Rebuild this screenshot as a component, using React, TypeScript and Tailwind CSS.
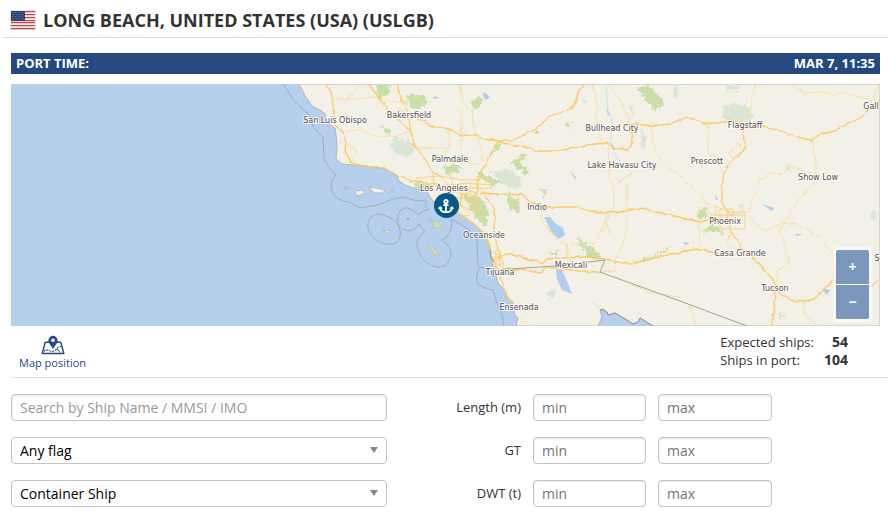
import { useId } from "react";
import type { InputHTMLAttributes, ReactNode } from "react";
import { FaAnchor } from "react-icons/fa";
import clsx from "clsx";

type MapLabel = { name: string; x: number; y: number };

const cities: MapLabel[] = [
  { name: "San Luis Obispo", x: 335, y: 123 },
  { name: "Bakersfield", x: 409, y: 118 },
  { name: "Palmdale", x: 450, y: 162 },
  { name: "Los Angeles", x: 444, y: 191 },
  { name: "Oceanside", x: 484, y: 238 },
  { name: "Tijuana", x: 500, y: 275 },
  { name: "Ensenada", x: 519, y: 310 },
  { name: "Indio", x: 537, y: 210 },
  { name: "Mexicali", x: 571, y: 268 },
  { name: "Bullhead City", x: 612, y: 131 },
  { name: "Lake Havasu City", x: 622, y: 168 },
  { name: "Prescott", x: 707, y: 164 },
  { name: "Flagstaff", x: 745, y: 128 },
  { name: "Phoenix", x: 725, y: 224 },
  { name: "Casa Grande", x: 740, y: 256 },
  { name: "Tucson", x: 775, y: 291 },
  { name: "Show Low", x: 818, y: 180 },
  { name: "Gall", x: 871, y: 109 },
  { name: "S", x: 877, y: 261 },
];

const highways = [
  "M368 84 L379 97 L388 109 L400 121 L411 132 L415 146 L425 159 L431 170 L440 177",
  "M325 84 L331 92 L333 105 L334 116 L336 125 L343 132 L346 142 L344 152 L353 164 L373 167 L386 168 L397 176 L410 180 L425 183 L440 184",
  "M397 84 L401 100 L408 112 L411 132",
  "M397 110 L417 118 L432 126 L450 130 L460 135 L476 135 L484 139 L498 141 L513 140 L530 132 L536 129 L550 116 L562 112 L573 108 L577 97 L583 84",
  "M498 141 L490 155 L481 173 L477 184 L476 200",
  "M498 142 L530 148 L537 151 L560 151 L575 147 L607 142 L613 148 L628 150 L632 141 L633 124 L652 126 L670 124 L687 117 L703 123 L719 123 L729 121 L744 124 L763 126 L782 131 L796 137 L812 140 L822 134 L834 131 L852 121 L861 117 L872 106 L880 101",
  "M743 128 L744 140 L747 147 L739 155 L730 162 L724 171 L722 190 L722 203 L728 213 L730 230 L742 249 L757 261 L773 280 L780 294 L790 300 L804 301 L814 299 L824 289 L833 281 L849 286 L866 288 L880 280",
  "M480 193 L500 194 L522 195 L533 204 L546 207 L577 207 L590 211 L615 213 L640 208 L670 215 L700 222 L712 219",
  "M454 208 L467 219 L478 227 L486 234 L490 247 L492 257 L497 268 L502 284 L509 300 L514 303",
  "M494 260 L508 254 L533 260 L542 264 L547 259 L560 258 L591 257 L610 260 L615 263 L632 264 L655 258 L680 252 L696 249 L714 253 L730 252",
  "M502 269 L520 269 L540 273 L545 268 L557 268 L580 271 L600 272",
  "M774 285 L775 303 L772 326",
  "M480 188 L488 200 L495 209 L494 230 L498 250 L500 262",
];

const roads = [
  "M333 99 L352 99 L375 97 L398 102 L410 102",
  "M346 132 L360 129 L376 137 L392 136 L411 132",
  "M344 152 L352 163 L357 151 L345 143",
  "M348 99 L362 84 M418 148 L448 148 M449 130 L449 147 L444 163",
  "M460 84 L461 100 L472 113 L475 131 L481 150 L483 162 M450 162 L480 164",
  "M461 84 L463 98 M593 84 L597 105 L597 126 L602 140 L608 145 L609 180 L614 186 L614 206",
  "M608 84 L621 102 L631 124 M621 122 L633 124 L632 145",
  "M461 134 L461 110 M652 126 L655 150 L663 163 L678 174 L707 203 L722 209",
  "M707 123 L709 134 L708 155 L716 156 L722 171",
  "M730 153 L738 143 L741 144 L739 153 L733 158 L729 153",
  "M755 84 L752 100 L749 117 M790 84 L803 93 L820 92 L833 95 L843 92 L858 97 L875 100 L876 88 L880 86",
  "M812 140 L816 162 L816 180 L796 203 L780 230 L785 246 L789 263 L778 270 L777 286",
  "M751 206 L759 179 L773 173 L782 174 L791 166 L803 171 L816 174",
  "M749 215 L758 226 L765 231 L782 223 L797 225 L817 235 L833 254 L834 280",
  "M804 302 L804 313 L819 326 M690 306 L696 326 M740 252 L727 244 L730 231",
  "M632 172 L617 184 M627 184 L627 208 L627 230 L620 250 L614 264 L614 272 L602 271",
  "M542 219 L553 237 L567 245 L571 268 M567 245 L567 257 M570 245 L594 244 L606 226 L607 211",
  "M608 213 L600 232 M544 206 L541 218 L555 238 M632 285 L650 292 L680 297",
  "M700 222 L699 246 M700 207 L714 215 L730 216 L744 211 L752 208",
  "M520 318 L532 326 M461 124 L461 148",
];

const urban = [
  "M416 178 L440 176 L462 180 L480 180 M427 185 L442 186 L465 183 L492 185 M441 176 L450 188 L461 194 L472 194",
  "M433 174 L434 184 M448 170 L452 180 L453 196 M460 183 L461 206 L470 214 M466 182 L467 200 L478 205",
  "M455 190 L475 192 L474 209 M456 198 L478 199 M458 204 L483 216 M463 192 L458 214 L470 216",
  "M470 183 L470 198 L480 207 M474 180 L478 176 L492 183 L491 188 L470 188 M452 194 L462 206",
  "M490 252 L500 255 L504 263 L496 266 M496 250 L496 268 M493 257 L503 258 M500 250 L500 267 M504 262 L501 275",
  "M716 207 L716 222 L733 222 L733 209 L720 209 L720 229 L745 229 L745 212 L727 212 L727 224 M710 215 L744 215",
];

const parks = [
  "M407 95 L425 94 L427 100 L420 110 L408 107 Z",
  "M471 101 L482 98 L483 105 L473 111 Z",
  "M637 88 L647 84 L657 94 L664 102 L656 112 L648 103 L643 95 Z",
  "M510 163 L524 153 L528 155 L520 162 L529 172 L525 174 Z",
  "M378 124 L390 131 L390 135 L380 127 Z",
  "M463 194 L480 198 L488 212 L486 227 L475 218 Z",
  "M442 166 L459 164 L460 173 L448 175 Z",
  "M475 170 L488 176 L501 182 L494 186 L480 178 Z",
  "M576 236 L590 246 L600 255 L599 260 L588 257 L582 247 Z",
  "M505 192 L518 200 L520 213 L510 209 Z",
  "M565 123 L571 121 L571 127 L565 127 Z M534 131 L541 128 L538 133 Z",
  "M697 209 L708 208 L705 217 L698 218 Z M738 205 L743 206 L742 210 Z",
  "M412 182 L425 183 L424 190 L414 188 Z",
  "M638 261 L652 256 L672 246 L671 248 L651 259 Z",
  "M711 224 L718 226 L726 236 L716 231 L702 232 Z M549 253 L559 251 L557 256 Z",
  "M492 151 L499 144 L501 150 L494 152 Z M541 190 L546 189 L545 198 Z",
  "M377 84 L390 84 L388 94 L378 99 Z",
];

const forests = [
  "M392 142 L407 139 L417 147 L409 156 L394 154 L390 147 Z",
  "M393 138 L399 138 L398 143 L391 142 Z",
  "M490 170 L512 171 L523 180 L518 188 L506 187 L497 178 Z",
  "M722 107 L735 103 L748 107 L753 116 L750 123 L735 122 L724 119 Z",
  "M725 84 L741 84 L738 91 L727 89 Z M673 84 L680 84 L677 97 L673 96 Z",
  "M642 128 L646 140 L645 150 L641 142 Z M628 105 L634 107 L633 117 L629 112 Z",
  "M548 291 L554 289 L556 294 L549 299 Z M785 165 L791 165 L789 172 Z",
  "M869 212 L877 210 L878 219 L871 220 Z M778 313 L785 314 L780 320 Z",
  "M582 98 L586 99 L585 106 Z M508 198 L520 205 L519 211 L509 206 Z",
];

const lakes = [
  "M544 217 L550 217 L555 223 L563 228 L565 235 L559 239 L552 233 Z",
  "M556 269 L562 270 L567 281 L572 294 L562 290 L557 279 Z",
  "M484 92 L490 97 L486 100 L483 96 Z",
  "M570 171 L577 178 L575 179 Z M762 204 L774 208 L772 211 Z",
  "M823 289 L831 290 L826 295 Z M795 234 L803 234 L797 236 Z",
  "M434 96 L439 98 L433 99 Z M612 144 L616 150 L612 149 Z",
  "M683 242 L690 243 L685 245 Z M715 194 L718 199 L716 200 Z M606 108 L610 114 L608 116 Z",
];

const islands = [
  "M354 191 L363 190 L365 193 L358 196 Z",
  "M369 187 L376 188 L385 190 L383 193 L374 193 Z",
  "M344 188 L350 188 L349 190 Z M390 190 L394 190",
  "M383 230 L390 231 L389 234 Z",
  "M428 219 L433 221 L431 222 Z",
];

function FlagIcon() {
  return (
    <svg viewBox="0 0 26 20" className="h-5 w-6.5 shrink-0" role="img" aria-label="United States">
      <rect width="26" height="20" fill="#e4e4e4" />
      <rect x="1" y="1" width="24" height="18" fill="#f2eeee" />
      {[1, 4, 7, 10, 12, 15, 18].map((y) => (
        <rect key={y} x="1" y={y} width="24" height="1.2" fill="#c8444d" />
      ))}
      <rect x="1" y="1" width="14" height="10" fill="#31456f" />
      <g fill="#6679a0">
        {[2, 4, 6, 8].map((y) =>
          [2, 5, 8, 11].map((x) => <rect key={`${x}-${y}`} x={x + (y % 4 ? 0 : 1)} y={y} width="1" height="1" />)
        )}
      </g>
    </svg>
  );
}

function MapPinIcon() {
  return (
    <svg viewBox="0 0 24 19" className="h-5 w-6" fill="none" stroke="#27497f" aria-hidden="true">
      <path d="M8 6.800H4.200L1.200 18h21.600L19.800 6.800H16" strokeWidth="1.4" strokeLinejoin="round" />
      <path d="M3 16c2-3 4-1 5.500-.7s2.500 1 4.500.2c3-1 2-3 5-4l2.500-.8" strokeWidth="1.100" strokeDasharray="2 1" />
      <path d="M16 13l3 4" strokeWidth="1" />
      <path
        d="M12 .3a4.600 4.600 0 0 0-4.600 4.600c0 3.200 3 5.200 4.600 8.600 1.600-3.400 4.600-5.400 4.600-8.600A4.600 4.600 0 0 0 12 .3Z"
        fill="#27497f"
        stroke="none"
      />
      <circle cx="12" cy="4.800" r="1.800" fill="#fff" stroke="none" />
    </svg>
  );
}

function PortMap() {
  return (
    <div className="relative h-[242px] overflow-hidden bg-[#b5cfed]">
      <svg
        viewBox="11 84 869 242"
        preserveAspectRatio="xMidYMid slice"
        className="block size-full"
        role="img"
        aria-label="Map of Southern California and Arizona"
      >
        {/* roughens the edges of parks and the run of roads */}
        <filter id="ragged" x="0" y="0" width="100%" height="100%">
          <feTurbulence type="fractalNoise" baseFrequency="0.25" numOctaves="2" seed="3" />
          <feDisplacementMap in="SourceGraphic" scale="9" xChannelSelector="R" yChannelSelector="G" />
        </filter>
        <filter id="winding" x="0" y="0" width="100%" height="100%">
          <feTurbulence type="fractalNoise" baseFrequency="0.12" numOctaves="2" seed="8" />
          <feDisplacementMap in="SourceGraphic" scale="4" xChannelSelector="R" yChannelSelector="G" />
        </filter>

        <path
          d="M298 84 L302 89 L305 96 L312 106 L320 110 L325 114 L327 123 L335 128 L336 134 L337 147 L336 159 L342 164 L353 165 L373 167 L385 169 L397 175 L399 181 L407 186 L417 189 L427 191 L430 197 L435 203 L440 204 L447 209 L457 212 L473 223 L483 232 L487 240 L490 250 L492 262 L495 272 L498 283 L505 290 L507 298 L512 302 L515 315 L518 318 L516 326 L598 326 L602 317 L600 310 L603 310 L607 312 L608 315 L615 313 L627 320 L633 324 L638 322 L640 318 L653 326 L880 326 L880 84 Z"
          fill="#f3f0e7"
          stroke="#a9aba9"
          strokeWidth="0.8"
        />
        <g filter="url(#ragged)">
          <rect x="11" y="84" width="869" height="242" fill="none" />
          <g fill="#dbe5d3">{forests.map((d) => <path key={d} d={d} />)}</g>
          <g fill="#cbdda9">{parks.map((d) => <path key={d} d={d} />)}</g>
        </g>
        <g fill="#b0ccef">{lakes.map((d) => <path key={d} d={d} />)}</g>
        <g fill="#f3f0e7" stroke="#a9aba9" strokeWidth="0.7">{islands.map((d) => <path key={d} d={d} />)}</g>
        <path d="M433 222 L437 221 L442 227 L434 228 Z M428 243 L432 246 L440 255 L434 255 Z" fill="#cbdda9" stroke="#bbb9a0" strokeWidth="0.5" />
        <path d="M606 84 L608 110 L612 120 L611 145 L617 158 L632 173 L617 184 M614 207 L606 222 L611 235 M591 302 L600 308" fill="none" stroke="#cbd9e6" strokeWidth="0.8" />

        {/* territorial waters */}
        <g fill="none" stroke="#9aa5b2" strokeWidth="0.8">
          <path d="M283 84 L295 102 L305 111 L312 119 L313 127 L323 137 L324 159 L330 169 L336 175 Q329 182 332 191 Q336 201 349 202 L360 208 L378 205 L393 199 L403 197 L417 201 L426 200 L426 208" />
          <path d="M398 224 Q388 214 377 214 Q366 217 368 229 C372 240 385 247 396 243 Q404 237 398 224" />
          <path d="M418 215 Q412 207 404 208 Q396 212 398 224 C405 234 414 232 419 224" />
          <path d="M418 215 Q422 210 430 209 M419 224 L425 232 Q416 237 417 247 C422 264 436 271 446 265 C455 255 451 245 441 240 C451 237 453 226 451 219 L467 228 L477 240 L478 267 L492 269" />
          <path d="M480 268 Q474 276 478 284 Q484 289 493 290 L497 303 L502 315 L504 326" />
        </g>
        <circle cx="408" cy="219" r="0.800" fill="#777" />

        <g filter="url(#winding)" fill="none">
          <g stroke="#fbdc98" strokeWidth="0.9">{roads.map((d) => <path key={d} d={d} />)}</g>
          <g stroke="#fbcb68" strokeWidth="1.3" strokeLinejoin="round">{highways.map((d) => <path key={d} d={d} />)}</g>
        </g>
        <g fill="none" stroke="#fbcf72" strokeWidth="0.9">{urban.map((d) => <path key={d} d={d} />)}</g>
        <path d="M496 270 L555 266 L605 260 L600 272 L680 301 L747 326" fill="none" stroke="#a4a29c" strokeWidth="1" />
        <path d="M600 310 L603 309 L607 312 L608 315 L615 313 L627 320 L633 324 L638 322 L640 318 L653 326 M490 250 L491 258 L494 262" fill="none" stroke="#8d9197" strokeWidth="0.9" />

        <g
          className="font-['DejaVu_Sans',sans-serif] text-[8px]"
          fill="#4d4d4d"
          stroke="#fff"
          strokeWidth="2"
          strokeLinejoin="round"
          strokeOpacity="0.8"
          paintOrder="stroke"
          textAnchor="middle"
        >
          {cities.map((city) => (
            <text key={city.name} x={city.x} y={city.y}>
              {city.name}
            </text>
          ))}
        </g>
      </svg>

      <span className="absolute top-[109px] left-1/2 ml-[-12px] flex size-[25px] items-center justify-center rounded-full bg-[#065888] text-white">
        <FaAnchor className="size-4" aria-label="Port of Long Beach" />
      </span>

      <div className="absolute right-2 bottom-1 flex flex-col gap-px rounded-sm bg-white/50 p-[3px] text-white">
        <ZoomButton label="Zoom in">+</ZoomButton>
        <ZoomButton label="Zoom out">−</ZoomButton>
      </div>
    </div>
  );
}

function ZoomButton({ label, children }: { label: string; children: ReactNode }) {
  return (
    <button
      type="button"
      aria-label={label}
      className="flex h-[34px] w-[33px] items-center justify-center bg-[#7b98bc] text-sm font-bold first:rounded-t-xs last:rounded-b-xs"
    >
      {children}
    </button>
  );
}

function TextInput({ className, ...props }: InputHTMLAttributes<HTMLInputElement>) {
  return (
    <input
      type="text"
      className={clsx(
        "h-[27px] w-full min-w-0 rounded-sm border border-[#c4c4c4] bg-white px-2 text-sm shadow-[inset_0_1px_2px_rgba(0,0,0,0.1)] outline-none",
        className ?? "placeholder:text-[#757575]"
      )}
      {...props}
    />
  );
}

function SelectBox({ label, options }: { label: string; options: string[] }) {
  return (
    <div className="relative">
      <select
        aria-label={label}
        className="block h-[27px] w-full appearance-none rounded-sm border border-[#c4c4c4] bg-white px-2 text-sm text-black outline-none"
      >
        {options.map((option) => (
          <option key={option}>{option}</option>
        ))}
      </select>
      <svg viewBox="0 0 8 6" className="pointer-events-none absolute top-[10px] right-[9px] h-1.5 w-2" aria-hidden="true">
        <path d="M0 0h8L4 6z" fill="#888" />
      </svg>
    </div>
  );
}

function RangeFields({ label }: { label: string }) {
  const id = useId();

  return (
    <>
      <label htmlFor={id} className="text-right text-[13px]">
        {label}
      </label>
      <TextInput id={id} placeholder="min" />
      <TextInput placeholder="max" aria-label={`${label} max`} />
      <span />
    </>
  );
}

export default function App() {
  return (
    <main className="bg-white font-['Open_Sans','Noto_Sans',sans-serif] text-sm text-[#333]">
      <header className="ml-[3px] flex h-[38px] items-center gap-[7px] border-b border-[#ddd] pt-0.5 pl-[7px]">
        <FlagIcon />
        <h1 className="text-lg leading-6 font-bold whitespace-nowrap">LONG BEACH, UNITED STATES (USA) (USLGB)</h1>
      </header>

      <section className="mt-[15px] mr-2 ml-[11px]">
        <div className="mb-2.5 flex h-[21px] items-center justify-between bg-[#25497f] px-[5px] text-[13px] font-bold text-white">
          <span>PORT TIME:</span>
          <time>MAR 7, 11:35</time>
        </div>
        <PortMap />
      </section>

      <section className="ml-[11px] flex h-[52px] items-start justify-between border-b border-[#e2e2e2] pr-10">
        <button type="button" className="mt-[9px] ml-2 flex flex-col items-center text-[11px] leading-4 text-[#27497f]">
          <MapPinIcon />
          Map position
        </button>
        <dl className="mt-[7px] grid grid-cols-[auto_auto] gap-x-2.5 leading-[18px]">
          <dt className="text-[13px]">Expected ships:</dt>
          <dd className="text-right font-bold">54</dd>
          <dt className="text-[13px]">Ships in port:</dt>
          <dd className="text-right font-bold">104</dd>
        </dl>
      </section>

      <form className="mt-4 mr-2 ml-[11px] grid grid-cols-[376fr_122fr_113fr_114fr_96fr] items-center gap-x-3 gap-y-4 pb-2">
        <TextInput
          placeholder="Search by Ship Name / MMSI / IMO"
          aria-label="Search by Ship Name / MMSI / IMO"
          className="placeholder:text-[#999]"
        />
        <RangeFields label="Length (m)" />
        <SelectBox label="Flag" options={["Any flag", "United States", "Panama", "Liberia"]} />
        <RangeFields label="GT" />
        <SelectBox label="Ship type" options={["Container Ship", "Bulk Carrier", "Tanker"]} />
        <RangeFields label="DWT (t)" />
      </form>
    </main>
  );
}
